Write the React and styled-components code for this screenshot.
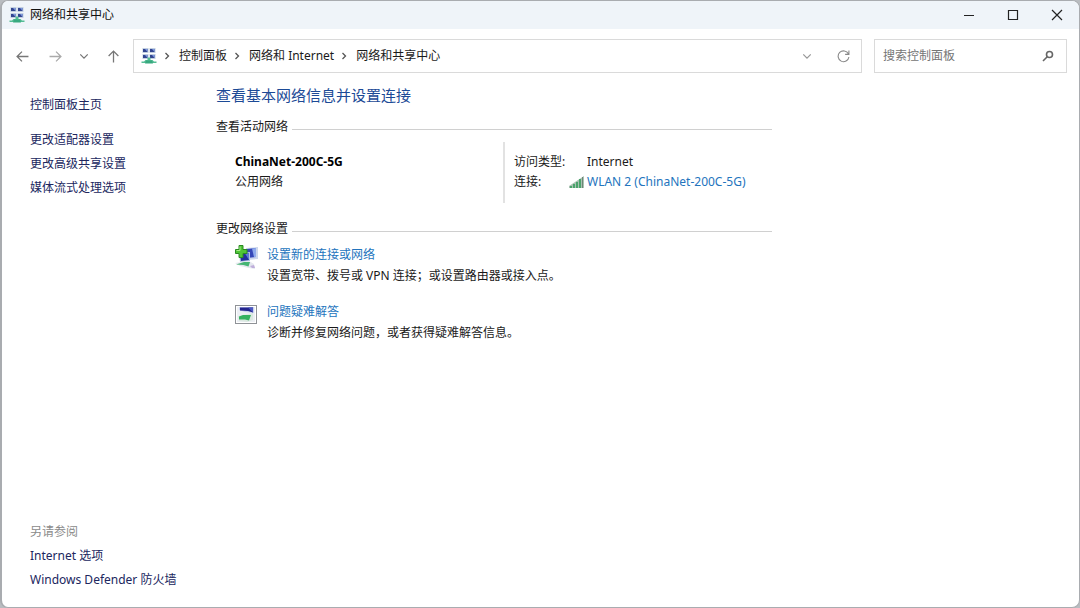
import React from 'react';
import styled, {createGlobalStyle} from 'styled-components';

const GlobalStyle = createGlobalStyle`
    * {
        box-sizing: border-box;
    }

    body {
        margin: 0;
        background-color: #b9bcc0;
        color: #1a1a1a;
        font-family: 'Noto Sans', 'Noto Sans CJK SC', sans-serif;
        font-size: 12px;
        line-height: 20px;
    }

    button,
    input {
        font: inherit;
    }
`;

const Window = styled.div`
    display: flex;
    flex-direction: column;
    min-height: 100vh;
    border: 1px solid #a9acb0;
    border-left-width: 2px;
    border-radius: 8px;
    background-color: #fff;
    overflow: hidden;
`;

const TitleBar = styled.header`
    display: flex;
    align-items: center;
    height: 28px;
    padding-left: 7px;
    background-color: #eff4f9;
`;

const Title = styled.h1`
    flex: 1;
    margin: 0 0 0 5px;
    font-size: 12px;
    font-weight: 400;
    color: #111;
`;

const WindowButton = styled.button`
    display: flex;
    align-items: center;
    justify-content: center;
    width: 44px;
    height: 28px;
    padding: 0;
    border: 0;
    background: none;
    color: #222;
`;

const Toolbar = styled.div`
    display: flex;
    align-items: center;
    padding: 10px 12px 0 11px;
`;

const IconButton = styled.button`
    display: flex;
    align-items: center;
    justify-content: center;
    flex: none;
    width: ${({$width}) => $width || 18}px;
    height: 20px;
    padding: 0;
    border: 0;
    background: none;
    color: ${({$color}) => $color || '#777'};
`;

const NavButtons = styled.nav`
    display: flex;
    gap: 15px;
    width: 120px;
`;

const AddressBar = styled.div`
    display: flex;
    align-items: center;
    flex: 1;
    height: 34px;
    padding: 0 8px 0 7px;
    border: 1px solid #dadada;
`;

const Crumbs = styled.ol`
    display: flex;
    align-items: center;
    flex: 1;
    margin: 0;
    padding: 0;
    list-style: none;
`;

const Crumb = styled.li`
    display: flex;
    align-items: center;
`;

const CrumbLink = styled.a`
    color: #1a1a1a;
    text-decoration: none;
`;

const CrumbArrow = styled.svg`
    flex: none;
    width: 22px;
    height: 10px;
    color: #555;
`;

const SearchBox = styled.label`
    display: flex;
    align-items: center;
    width: 193px;
    height: 34px;
    margin-left: 12px;
    padding: 0 12px 0 8px;
    border: 1px solid #dadada;
    color: #666;
`;

const SearchInput = styled.input`
    flex: 1;
    min-width: 0;
    padding: 0;
    border: 0;
    outline: 0;
    background: none;

    &::placeholder {
        color: #757575;
        opacity: 1;
    }
`;

const Body = styled.div`
    display: flex;
    flex: 1;
`;

const Sidebar = styled.aside`
    display: flex;
    flex-direction: column;
    flex: none;
    width: 214px;
    padding: 20px 12px 15px 28px;
    line-height: 24px;
`;

const SideGroup = styled.nav`
    display: flex;
    flex-direction: column;
    align-items: flex-start;
    margin-top: ${({$bottom}) => ($bottom ? 'auto' : '11px')};

    &:first-child {
        margin-top: 0;
    }
`;

const SideLink = styled.a`
    color: #20265e;
    text-decoration: none;
`;

const SideLabel = styled.span`
    color: #8a8a8a;
`;

const Content = styled.main`
    flex: 1;
    max-width: 556px;
    padding-top: 12px;
`;

const Heading = styled.h2`
    margin: 0 0 12px;
    font-size: 15px;
    font-weight: 400;
    line-height: 20px;
    color: #1c4a96;
`;

const Section = styled.section`
    margin-bottom: 16px;
`;

const SectionTitle = styled.h3`
    display: flex;
    align-items: center;
    gap: 4px;
    margin: 0;
    font-size: 12px;
    font-weight: 400;

    &::after {
        content: '';
        flex: 1;
        height: 1px;
        margin-top: 4px;
        background-color: #d0d0d0;
    }
`;

const ActiveNetwork = styled.div`
    display: flex;
    margin-top: 5px;
`;

const NetworkName = styled.div`
    flex: 1;
    padding: 10px 0 0 19px;
`;

const Strong = styled.strong`
    display: block;
    font-weight: 700;
    color: #000;
`;

const Details = styled.dl`
    display: grid;
    grid-template-columns: 54px 1fr;
    align-content: start;
    width: 269px;
    min-height: 61px;
    margin: 0;
    padding: 10px 0 0 9px;
    border-left: 2px solid #e2e2e2;
`;

const Term = styled.dt`
    white-space: nowrap;
`;

const Value = styled.dd`
    display: flex;
    align-items: center;
    gap: 3px;
    margin: 0;
    padding-left: ${({$indent}) => ($indent ? 19 : 1)}px;
    white-space: nowrap;
`;

const Link = styled.a`
    color: #2374bd;
    text-decoration: none;
`;

const Task = styled.div`
    display: flex;
    gap: 9px;
    padding: 6px 0 10px 19px;
`;

const TaskIcon = styled.svg`
    flex: none;
    width: 23px;
    height: 24px;
`;

const TaskText = styled.p`
    margin: 1px 0 0;
`;

const NetworkIcon = () => (
    <svg width="16" height="16" viewBox="0 0 16 16" aria-hidden="true">
        {[[2, 0], [9, 0], [2, 6], [9, 6]].map(([x, y]) => (
            <g key={`${x}-${y}`}>
                <rect x={x - 0.5} y={y} width="6" height="5" fill="#c2cfe0" />
                <rect x={x} y={y + 1} width="4.5" height="3" fill="#33458f" />
                <path d={`M${x + 2} ${y + 1}h2.500v3z`} fill="#7f9be0" />
            </g>
        ))}
        <path d="M6.500 9.500h3v2.500h2l1.500 1.500h2.500V15H.5v-1.500H3L4.500 12h2z" fill="#55bd95" />
        <path d="M5 12.500h6l1 3H4z" fill="#37a97f" />
    </svg>
);

const Stroke = ({d, size = 12, width = 1.2}) => (
    <svg
        width={size}
        height={size}
        viewBox="0 0 12 12"
        fill="none"
        stroke="currentColor"
        strokeWidth={width}
        aria-hidden="true"
    >
        <path d={d} />
    </svg>
);

const SignalIcon = () => (
    <svg width="15" height="12" viewBox="0 0 15 12" aria-hidden="true">
        <path d="M0 12V10L15 0v12z" fill="#a9c2b2" />
        <path d="M1 10h2v2H1zM4 8h2v4H4zM7 6h2v6H7zM10 3h2v9h-2z" fill="#4ba36c" />
        <path d="M13 1h1v11h-1z" fill="#6d8576" />
    </svg>
);

const NewConnectionIcon = () => (
    <TaskIcon viewBox="0 0 23 24" aria-hidden="true">
        <path d="M11 3l12-1v12l-11 1z" fill="#ccd6ec" />
        <path d="M12 4l9-1v9l-9 1z" fill="#3547b8" />
        <path d="M17 3.500l4-.5v9l-2 0z" fill="#8faaec" />
        <path d="M4 8l11-1v9L5 17z" fill="#b4c3e2" />
        <path d="M5 9l9-1v7l-8 1z" fill="#222f9d" />
        <path d="M10 8.500l4-.5v7z" fill="#5b78d6" />
        <path d="M0 18l14-2 5 3 1 5-6-1-9-2z" fill="#e4e7ee" />
        <path d="M1 19.500l8-2.500h6l-1.500 4.500-5-1.500z" fill="#45b573" />
        <path d="M15 21l4-1 1 3-3 0z" fill="#bfaedb" />
        <path
            d="M4 .5h4v4h4v4H8v4H4v-4H.5v-4H4z"
            fill="#4fc436"
            stroke="#2a8a22"
            strokeWidth="1"
        />
        <path d="M5 1.500v4H1.500" fill="none" stroke="#a7ec8a" />
    </TaskIcon>
);

const TroubleshootIcon = () => (
    <TaskIcon viewBox="0 0 23 24" aria-hidden="true">
        <rect x="0.5" y="3.5" width="21" height="18" fill="#fff" stroke="#8f9297" />
        <rect x="2" y="5" width="18" height="15" fill="#eceff4" />
        <path d="M4 5h15v6l-9-1-6-2z" fill="#c9d1ee" />
        <path d="M5 5.500h13v5l-5-1.500-8-.5z" fill="#24258f" />
        <path d="M13 5.500h5v5z" fill="#4b58c2" />
        <path d="M3 14l15-3v7l-6 2-8-1z" fill="#dbe9e1" />
        <path d="M4 14.500l4-1.500h8l-2 5.500-4-1H4z" fill="#35b261" />
    </TaskIcon>
);

const crumbs = ['控制面板', '网络和 Internet', '网络和共享中心'];

const App = () => {
    return (
        <>
            <GlobalStyle />
            <Window>
                <TitleBar>
                    <NetworkIcon />
                    <Title>网络和共享中心</Title>
                    <WindowButton aria-label="最小化">
                        <Stroke d="M1 6.500h10" />
                    </WindowButton>
                    <WindowButton aria-label="最大化">
                        <Stroke d="M1.500 1.500h9v9h-9z" />
                    </WindowButton>
                    <WindowButton aria-label="关闭">
                        <Stroke d="M1 1l10 10M11 1L1 11" />
                    </WindowButton>
                </TitleBar>
                <Toolbar>
                    <NavButtons>
                        <IconButton aria-label="后退">
                            <Stroke size={13} d="M11.500 6H1M5.500 1.500L1 6l4.500 4.500" />
                        </IconButton>
                        <IconButton aria-label="前进" $color="#aaa">
                            <Stroke size={13} d="M.5 6H11M6.500 1.500L11 6l-4.500 4.500" />
                        </IconButton>
                        <IconButton aria-label="最近" $width={10}>
                            <Stroke size={10} width={1.500} d="M1.500 4L6 8.500 10.500 4" />
                        </IconButton>
                        <IconButton aria-label="向上">
                            <Stroke size={13} d="M6 11.500V1M1.500 5.500L6 1l4.500 4.500" />
                        </IconButton>
                    </NavButtons>
                    <AddressBar>
                        <NetworkIcon />
                        <Crumbs>
                            {crumbs.map((crumb) => (
                                <Crumb key={crumb}>
                                    <CrumbArrow
                                        viewBox="0 0 22 10"
                                        fill="none"
                                        stroke="currentColor"
                                        strokeWidth="1.3"
                                        aria-hidden="true"
                                    >
                                        <path d="M8.500 2l3 3-3 3" />
                                    </CrumbArrow>
                                    <CrumbLink href="#">{crumb}</CrumbLink>
                                </Crumb>
                            ))}
                        </Crumbs>
                        <IconButton aria-label="历史记录" $color="#999" $width={52}>
                            <Stroke size={10} width={1.500} d="M1.500 4L6 8.500 10.500 4" />
                        </IconButton>
                        <IconButton aria-label="刷新" $color="#888" $width={20}>
                            <Stroke size={13} width={1} d="M10.500 3.500A5 5 0 1 0 11 6.500M11 .5v3.500H7.500" />
                        </IconButton>
                    </AddressBar>
                    <SearchBox>
                        <SearchInput type="search" placeholder="搜索控制面板" aria-label="搜索控制面板" />
                        <Stroke width={1.6} d="M1 11l4-4M4.500 4.500a3 3 0 1 1 6 0a3 3 0 1 1-6 0" />
                    </SearchBox>
                </Toolbar>
                <Body>
                    <Sidebar>
                        <SideGroup>
                            <SideLink href="#">控制面板主页</SideLink>
                        </SideGroup>
                        <SideGroup>
                            <SideLink href="#">更改适配器设置</SideLink>
                            <SideLink href="#">更改高级共享设置</SideLink>
                            <SideLink href="#">媒体流式处理选项</SideLink>
                        </SideGroup>
                        <SideGroup $bottom>
                            <SideLabel>另请参阅</SideLabel>
                            <SideLink href="#">Internet 选项</SideLink>
                            <SideLink href="#">Windows Defender 防火墙</SideLink>
                        </SideGroup>
                    </Sidebar>
                    <Content>
                        <Heading>查看基本网络信息并设置连接</Heading>
                        <Section>
                            <SectionTitle>查看活动网络</SectionTitle>
                            <ActiveNetwork>
                                <NetworkName>
                                    <Strong>ChinaNet-200C-5G</Strong>
                                    公用网络
                                </NetworkName>
                                <Details>
                                    <Term>访问类型:</Term>
                                    <Value $indent>Internet</Value>
                                    <Term>连接:</Term>
                                    <Value>
                                        <SignalIcon />
                                        <Link href="#">WLAN 2 (ChinaNet-200C-5G)</Link>
                                    </Value>
                                </Details>
                            </ActiveNetwork>
                        </Section>
                        <Section>
                            <SectionTitle>更改网络设置</SectionTitle>
                            <Task>
                                <NewConnectionIcon />
                                <div>
                                    <Link href="#">设置新的连接或网络</Link>
                                    <TaskText>设置宽带、拨号或 VPN 连接；或设置路由器或接入点。</TaskText>
                                </div>
                            </Task>
                            <Task>
                                <TroubleshootIcon />
                                <div>
                                    <Link href="#">问题疑难解答</Link>
                                    <TaskText>诊断并修复网络问题，或者获得疑难解答信息。</TaskText>
                                </div>
                            </Task>
                        </Section>
                    </Content>
                </Body>
            </Window>
        </>
    );
};

export default App;
